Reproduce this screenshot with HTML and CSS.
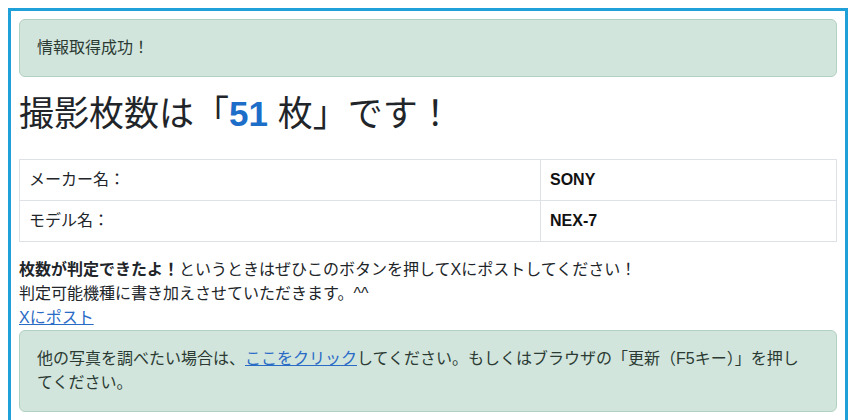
FILE: index.html
```html
<!DOCTYPE html>
<html lang="ja">
<head>
    <meta charset="UTF-8">
    <title>撮影枚数チェック</title>
    <link rel="stylesheet" href="styles.css">
</head>
<body>
    <div id="marco">
        <div class="alerta">情報取得成功！</div>

        <h1 id="resultado">撮影枚数は「<span id="numero">51</span> 枚」です！</h1>

        <table id="datos">
            <tr>
                <td class="etiqueta">メーカー名：</td>
                <td class="valor">SONY</td>
            </tr>
            <tr>
                <td class="etiqueta">モデル名：</td>
                <td class="valor">NEX-7</td>
            </tr>
        </table>

        <p id="aviso">
            <b>枚数が判定できたよ！</b>というときはぜひこのボタンを押してXにポストしてください！<br>
            判定可能機種に書き加えさせていただきます。^^<br>
            <a href="#">Xにポスト</a>
        </p>

        <div class="alerta" id="otraFoto">他の写真を調べたい場合は、<a href="#">ここをクリック</a>してください。もしくはブラウザの「更新（F5キー）」を押してください。</div>
    </div>
</body>
</html>
```

FILE: styles.css
```css
body {
    margin: 8px 7px 8px 8px;
    font-family: "Liberation Sans", "Noto Sans CJK JP", sans-serif;
    font-size: 16px;
    line-height: 1.5;
    color: #212529;
    background-color: white;
}

#marco {
    border: 3px solid #1fa0d8;
    padding: 8px 8px 40px 8px;
}

.alerta {
    background-color: #d1e5dc;
    border: 1px solid #b3d1c2;
    border-radius: 6px;
    padding: 16px 16px 16px 17px;
    color: #2b3a33;
}

#otraFoto {
    padding-right: 28px;
}

a {
    color: #2a6bc6;
    text-decoration: underline;
}

#resultado {
    font-size: 35px;
    font-weight: normal;
    line-height: 1.2;
    margin: 16px 0 24px 0;
}

#numero {
    color: #1d6ec9;
    font-weight: bold;
}

#datos {
    width: 100%;
    border-collapse: collapse;
    margin-bottom: 16px;
}

#datos td {
    border: 1px solid #dee2e6;
    padding: 8px 9px;
}

.etiqueta {
    width: 502px;
}

.valor {
    font-weight: bold;
    color: #111;
}

#aviso {
    margin: 0;
}

#aviso b {
    font-weight: bold;
}
```
